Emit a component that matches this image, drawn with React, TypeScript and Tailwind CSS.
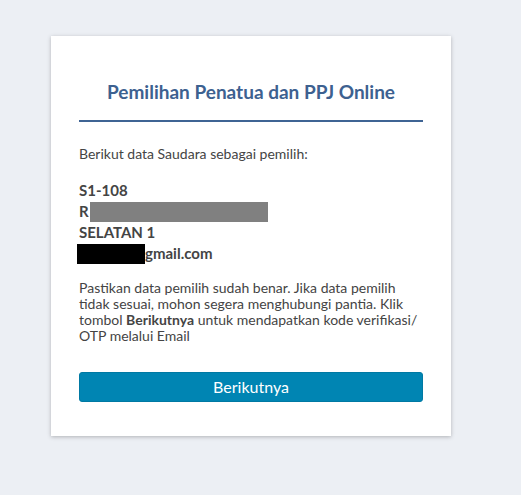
export default function App() {
  return (
    <div className="min-h-[495px] w-full bg-[#eceff4] pt-[36px] pl-[51px]" style={{ fontFamily: "Lato, 'Noto Sans', sans-serif" }}>
      <div className="w-[400px] bg-white px-[28px] pt-[44px] pb-[34px] shadow-[0_1px_4px_rgba(0,0,0,0.25)]">
        <h1 className="text-center text-[19px] font-bold leading-[24px] text-[#3d6190]">
          Pemilihan Penatua dan PPJ Online
        </h1>
        <div className="mt-[16px] h-[2px] bg-[#3f6494]" />
        <p className="mt-[24px] text-[14px] leading-[16px] text-[#444]">
          Berikut data Saudara sebagai pemilih:
        </p>
        <div className="mt-[18px] text-[15px] font-bold leading-[21px] text-[#444]">
          <div>S1-108</div>
          <div className="flex items-center">
            R<span className="ml-[1px] inline-block h-[20px] w-[178px] bg-[#808080]" />
          </div>
          <div>SELATAN 1</div>
          <div className="flex items-center">
            <span className="-ml-[2px] inline-block h-[20px] w-[68px] bg-black" />
            gmail.com
          </div>
        </div>
        <p className="mt-[16px] text-[14px] leading-[16px] text-[#444]">
          Pastikan data pemilih sudah benar. Jika data pemilih tidak sesuai, mohon segera menghubungi pantia. Klik tombol <b>Berikutnya</b> untuk mendapatkan kode verifikasi/ OTP melalui Email
        </p>
        <button className="mt-[28px] h-[30px] w-full rounded-[3px] border border-[#0079a3] bg-[#0085b3] text-[16px] text-white">
          Berikutnya
        </button>
      </div>
    </div>
  );
}
